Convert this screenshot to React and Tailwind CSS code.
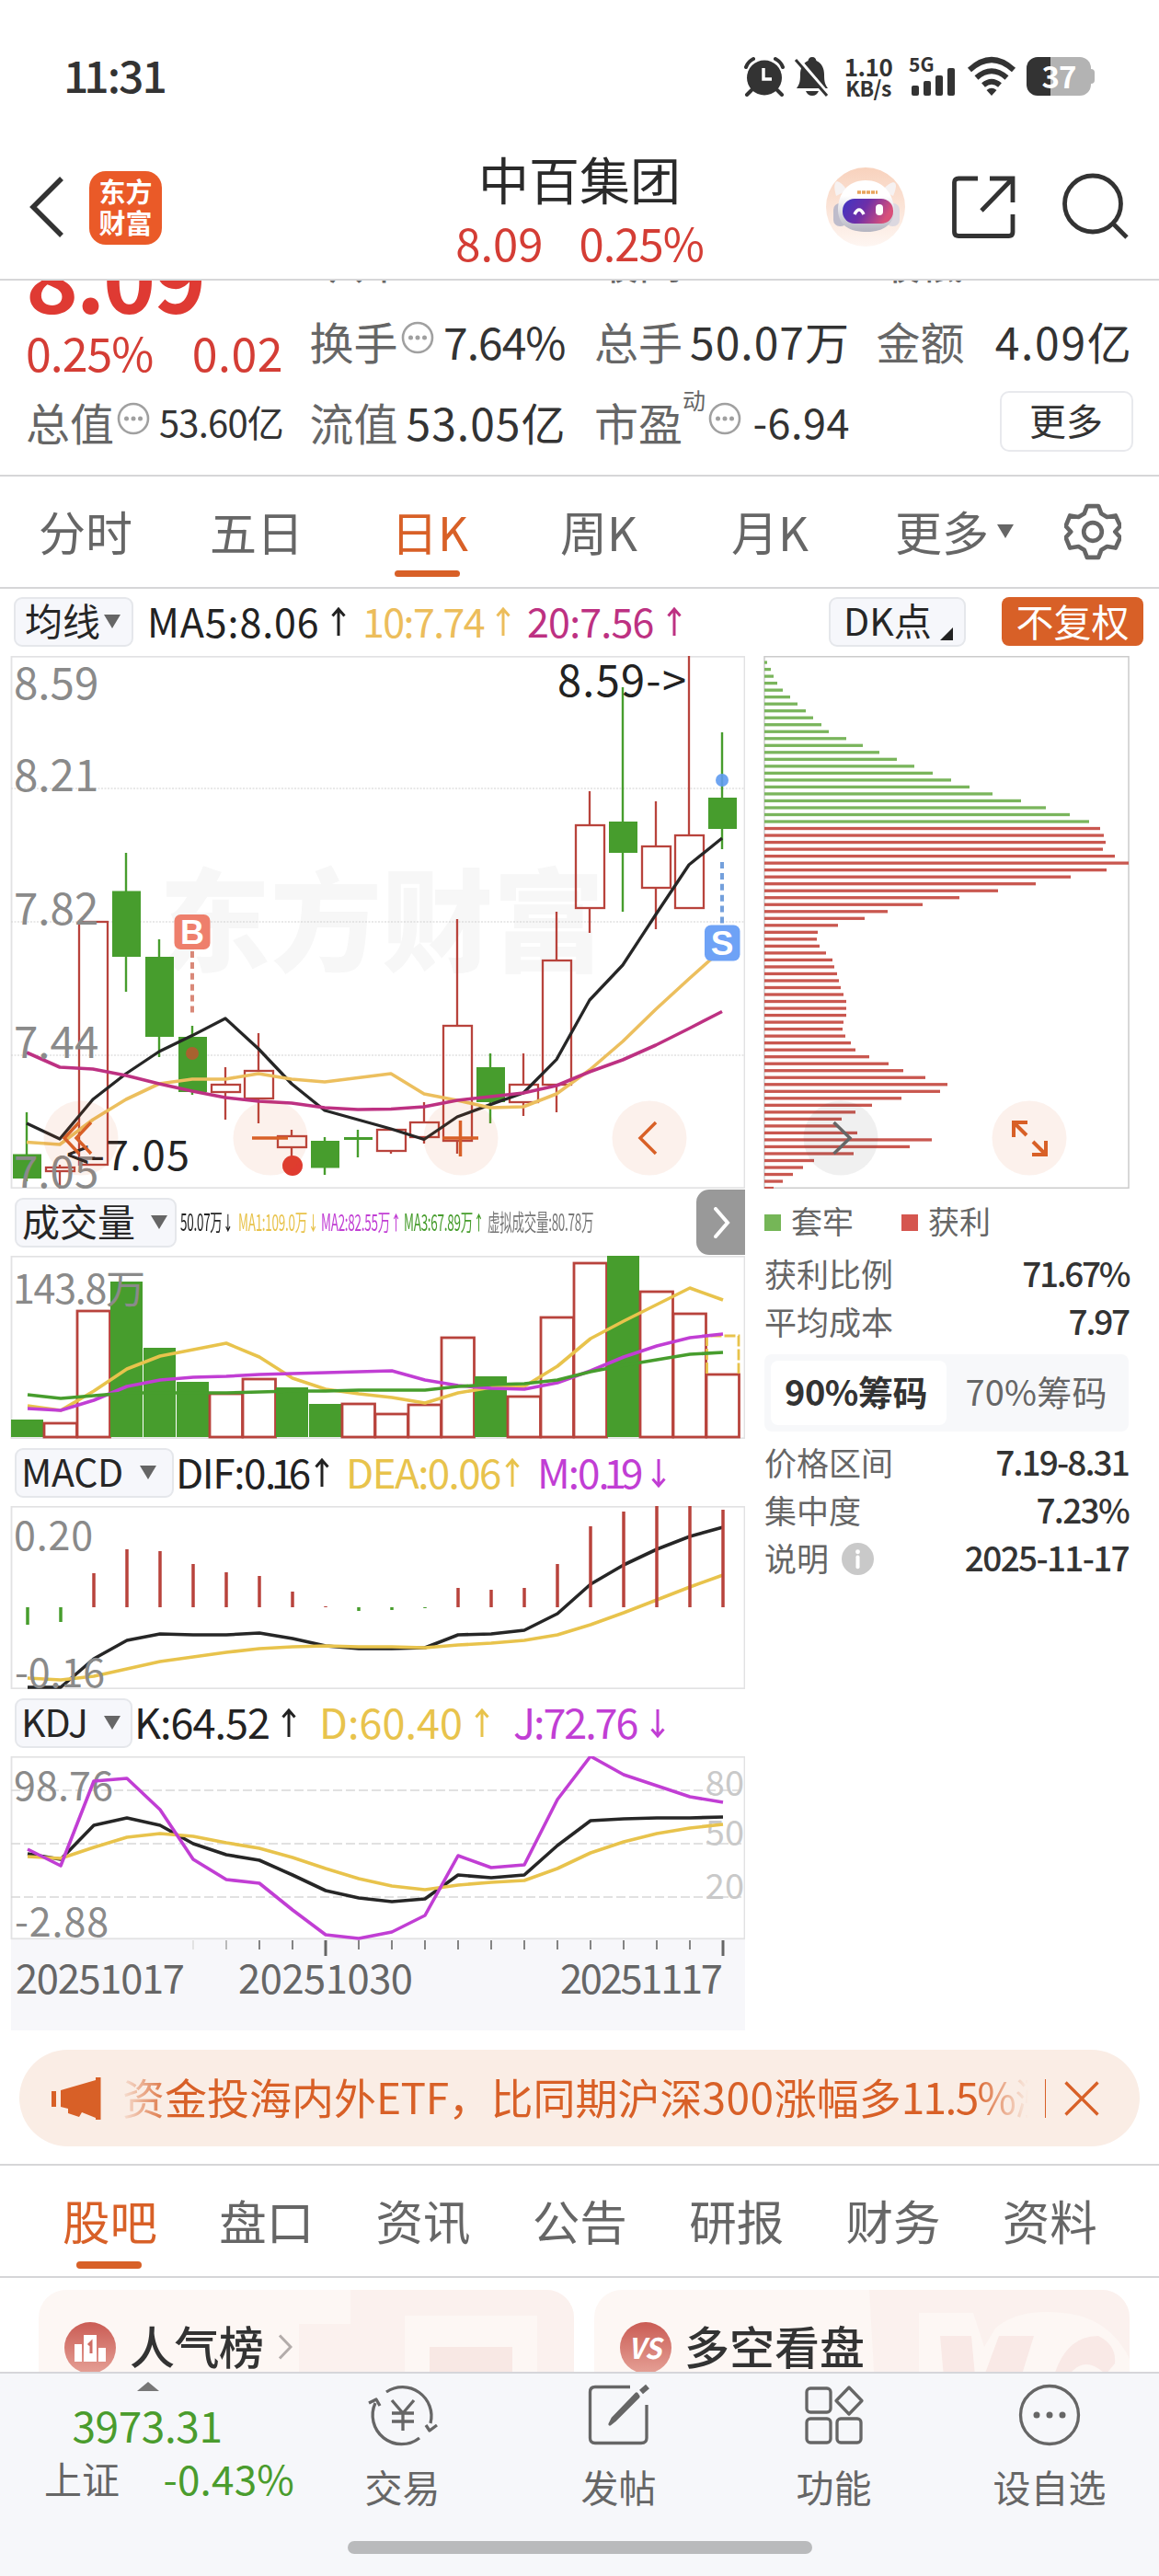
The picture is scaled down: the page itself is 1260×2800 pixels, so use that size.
import React from "react";

const X0 = 29;
const STEP = 36;
const RED = "#b8433c";
const GREEN = "#479d2d";

// [rising, bodyTop, bodyBottom, wickTop, wickBottom]
const candles = [
  [0, 1254.5, 1281, 1209, 1284],
  [1, 1269, 1273, 1266, 1292],
  [1, 1002, 1266, 1002, 1266],
  [0, 968.5, 1040, 927, 1078],
  [0, 1040, 1127, 1021, 1149],
  [0, 1127, 1187, 1115, 1190],
  [1, 1179, 1187, 1160, 1217],
  [1, 1164, 1194, 1123, 1221],
  [1, 1235, 1247, 1228, 1260],
  [0, 1240, 1269.5, 1236, 1277],
  [0, 1236, 1239, 1228, 1258],
  [1, 1228, 1251, 1228, 1254],
  [1, 1220, 1236, 1198, 1243],
  [1, 1115, 1240, 999, 1254],
  [0, 1160, 1198, 1145, 1221],
  [1, 1179, 1198, 1145, 1213],
  [1, 1044, 1179, 991, 1209],
  [1, 897, 987, 860, 1014],
  [0, 893, 927, 747, 991],
  [1, 920, 965, 871, 1010],
  [1, 908, 987, 713, 987],
  [0, 867, 901, 796, 923],
];
const ma5 = [1221, 1238, 1195, 1167, 1143, 1125.6, 1107, 1140, 1178, 1207, 1217, 1227, 1238.5, 1214, 1200.6, 1188, 1151.6, 1087, 1049, 994, 940, 911];
const ma10 = [1241.5, 1244, 1217, 1195, 1178, 1173, 1173, 1167, 1173, 1176, 1171.5, 1167, 1189, 1196, 1204, 1203, 1189, 1163, 1132, 1097, 1064, 1032];
const ma20 = [1144, 1160, 1162, 1169, 1178, 1186, 1193, 1197, 1199, 1204, 1206, 1205.5, 1203, 1196, 1192, 1188, 1180, 1165, 1152, 1136, 1118, 1099.5];

const volumes = [
  [0, 1543], [1, 1547], [1, 1425], [0, 1393], [0, 1465], [0, 1502], [1, 1515], [1, 1499], [0, 1508], [0, 1526], [1, 1526],
  [1, 1537], [1, 1527], [1, 1454], [0, 1496], [1, 1518], [1, 1432], [1, 1373], [0, 1365], [1, 1404], [1, 1428], [1, 1494],
];
const vol1 = [1528, 1533, 1512, 1488, 1474, 1467, 1460, 1475, 1498, 1510, 1515, 1519, 1525, 1514, 1508, 1507, 1485, 1455, 1436, 1418, 1400, 1413];
const vol2 = [1531, 1533, 1522, 1507, 1500, 1497, 1496, 1494, 1493, 1492, 1491, 1490, 1500, 1506, 1509, 1510, 1503, 1490, 1475, 1463, 1454, 1450];
const vol3 = [1516, 1520, 1517, 1514, 1514, 1514, 1514, 1513, 1512, 1512, 1511, 1511, 1511, 1507, 1505, 1504, 1500, 1491, 1484, 1478, 1472, 1470];

const macdBars = [1766, 1763, 1710, 1684, 1686, 1700, 1709, 1713, 1730, 1746, 1751, 1750, 1748, 1726, 1728, 1726, 1700, 1659, 1643, 1637, 1637, 1641];
const dif = [1834, 1834, 1803, 1783, 1776, 1777, 1777, 1775, 1781, 1789, 1792, 1792, 1791, 1777, 1776, 1772, 1754, 1722, 1701, 1684, 1670, 1660];
const dea = [1824, 1826, 1822, 1814, 1806, 1801, 1796, 1792, 1790, 1789, 1790, 1790, 1791, 1788, 1786, 1783, 1777, 1766, 1753, 1739, 1725, 1712];

const kLine = [2015, 2021, 1984, 1976, 1984, 2004, 2016, 2022, 2038, 2055, 2063, 2067, 2064, 2038, 2041, 2038, 2006, 1979, 1977, 1976, 1976, 1975];
const dLine = [2018, 2020, 2008, 1997, 1993, 1996, 2003, 2009, 2019, 2031, 2042, 2050, 2054, 2049, 2046, 2044, 2031, 2014, 2002, 1993, 1987, 1983];
const jLine = [2010, 2028, 1936, 1933, 1967, 2021, 2043, 2047, 2076, 2103, 2107, 2100, 2082, 2017, 2030, 2027, 1956, 1909, 1929, 1941, 1953, 1959];

const chipsTrapped = [3, 7, 10, 14, 20, 28, 36, 45, 53, 62, 70, 89, 107, 125, 144, 163, 183, 203, 223, 248, 279, 306, 332, 353];
const chipsProfit = [
  365, 369, 371, 368, 381, 396, 372, 333, 295, 254, 212, 172, 134, 109, 80, 58, 57, 60, 67, 74, 76, 79, 81, 83, 86, 89, 89, 89, 86, 85, 88,
  94, 99, 114, 135, 151, 175, 199, 191, 149, 117, 99, 84, 80, 101, 182, 158, 97, 54, 42, 31, 20, 10,
];

const pts = (ys, x0 = 30) => ys.map((y, i) => `${x0 + i * STEP},${y}`).join(" ");

function Line({ ys, color, x0, w = 3.6 }) {
  return <polyline points={pts(ys, x0)} fill="none" stroke={color} strokeWidth={w} strokeLinejoin="round" />;
}

function Frame({ top, height }) {
  return <rect x="12.5" y={top + 0.75} width="797" height={height - 1.5} fill="none" stroke="#e2e2e3" strokeWidth="1.8" />;
}

function Arrow({ down, className = "h-8 w-4" }) {
  return (
    <svg viewBox="0 0 16 32" className={`shrink-0 ${className}`} fill="none" stroke="currentColor" strokeWidth="3">
      {down ? <path d="M8 1V30M1.5 22.5L8 30L14.5 22.5" /> : <path d="M8 31V2M1.5 9.500L8 2L14.5 9.500" />}
    </svg>
  );
}

function Caret({ className = "" }) {
  return (
    <svg viewBox="0 0 18 15" className={`h-[15px] w-[18px] shrink-0 ${className}`} fill="#666">
      <path d="M0 0H18L9 15Z" />
    </svg>
  );
}

function More() {
  return (
    <svg viewBox="0 0 36 36" className="relative -top-[3px] ml-[3px] h-9 w-9 shrink-0">
      <circle cx="18" cy="18" r="16" fill="none" stroke="#a0a0a0" strokeWidth="2.6" />
      <g fill="#a0a0a0">
        <circle cx="10.500" cy="18" r="2.500" />
        <circle cx="18" cy="18" r="2.500" />
        <circle cx="25.500" cy="18" r="2.500" />
      </g>
    </svg>
  );
}

function StatusBar() {
  return (
    <div className="flex h-[166px] shrink-0 items-start pl-[69px] text-[#333]">
      <div className="mt-[56px] w-[739px] text-[48px] leading-[48px] font-medium">
        <span className="tracking-[-5px]">11</span>
        <span className="ml-[3px] tracking-[-2px]">:31</span>
      </div>
      <svg viewBox="0 0 46 44" className="mt-[61px] h-[44px] w-[46px]">
        <circle cx="23" cy="23.500" r="19" fill="#333" />
        <path d="M3 12Q5 6 11 3M43 12Q41 6 35 3M9 37L4 42M37 37L42 42" stroke="#333" strokeWidth="4" strokeLinecap="round" fill="none" />
        <path d="M22 13V25H31" stroke="#fff" strokeWidth="3.500" fill="none" />
      </svg>
      <svg viewBox="0 0 40 44" className="mt-[61px] ml-[9px] h-[44px] w-[40px]">
        <path d="M20 1C23 1 24 3 24.500 5C31 8 33 14 33 20C33 28 34 31 37 35H3C6 31 7 28 7 20C7 14 9 8 15.500 5C16 3 17 1 20 1Z M13 38H27Q25 43 20 43Q15 43 13 38Z" fill="#333" />
        <path d="M4 2L38 42" stroke="#fff" strokeWidth="4" />
        <path d="M2 4L36 43" stroke="#333" strokeWidth="3" />
      </svg>
      <div className="mt-[59px] ml-[13px] flex w-[56px] flex-col text-center font-semibold tracking-[-0.5px]">
        <span className="text-[26px] leading-[25px]">1.10</span>
        <span className="text-[23px] leading-[22px]">KB/s</span>
      </div>
      <div className="mt-[59px] ml-[16px] w-[52px]">
        <div className="h-[15px] text-[21px] leading-[21px] font-bold">5G</div>
        <svg viewBox="0 0 48 30" className="ml-[3px] h-[30px] w-[48px]" fill="#333">
          <rect x="0" y="19" width="8" height="11" rx="2" />
          <rect x="13" y="14" width="8" height="16" rx="2" />
          <rect x="26" y="8" width="8" height="22" rx="2" />
          <rect x="39" y="0" width="8" height="30" rx="2" />
        </svg>
      </div>
      <svg viewBox="0 0 54 44" className="mt-[61px] ml-[11px] h-[44px] w-[54px]" fill="none" stroke="#333" strokeWidth="6">
        <path d="M3 15Q27 -7 51 15M10.500 23.500Q27 9 43.500 23.500M18 31.500Q27 24 36 31.500" />
        <path d="M21.500 37Q27 32.500 32.500 37L27 43Z" fill="#333" stroke="none" />
      </svg>
      <div className="mt-[62px] ml-[11px] flex h-[42px] items-center">
        <div className="flex h-[42px] w-[70px] items-center justify-center rounded-[12px] bg-[linear-gradient(90deg,#333_37%,#b3b3b3_37%)] pb-[2px] text-[33px] leading-none font-bold tracking-[-1px] text-white">
          37
        </div>
        <div className="h-4 w-1 rounded-r-full bg-[#b3b3b3]" />
      </div>
    </div>
  );
}

function Robot() {
  return (
    <svg viewBox="0 0 88 88" className="h-[88px] w-[88px]">
      <defs>
        <linearGradient id="rb" x1="0" y1="0" x2="0" y2="1">
          <stop offset="0" stopColor="#f8d2bd" />
          <stop offset="1" stopColor="#fef6f2" />
        </linearGradient>
        <linearGradient id="rf" x1="0" y1="0" x2="1" y2="0.300">
          <stop offset="0" stopColor="#3f35c4" />
          <stop offset="0.500" stopColor="#6d2fa8" />
          <stop offset="1" stopColor="#d8507a" />
        </linearGradient>
        <linearGradient id="rh" x1="0" y1="0" x2="0" y2="1">
          <stop offset="0.300" stopColor="#fff" />
          <stop offset="1" stopColor="#b4b4c0" />
        </linearGradient>
      </defs>
      <circle cx="44" cy="44" r="43" fill="url(#rb)" />
      <path d="M12 32Q8 18 13 16Q18 17 24 26ZM74 32Q80 18 74 17Q69 18 62 26Z" fill="#f6f2f2" />
      <rect x="9" y="40" width="15" height="25" rx="7" fill="#bebccb" />
      <rect x="66" y="40" width="15" height="25" rx="7" fill="#dcd8e0" />
      <path d="M44 15C62 15 74 28 75 46C76 62 64 71 46 71C26 71 15 64 14 48C14 30 24 15 44 15Z" fill="url(#rh)" />
      <rect x="19" y="35" width="55" height="27" rx="13" fill="url(#rf)" />
      <path d="M32 52Q37 42 42 52" fill="none" stroke="#fff" strokeWidth="3.500" />
      <rect x="55" y="41" width="8" height="12" rx="4" fill="#fff" />
      <path d="M35 28H57" stroke="#e8a45c" strokeWidth="3.500" strokeDasharray="4 1" />
    </svg>
  );
}

function Header() {
  return (
    <div className="flex h-[139px] shrink-0 items-start border-b-2 border-[#d6d6d8] text-[#333]">
      <svg viewBox="0 0 40 66" className="mt-[26px] ml-[31px] h-[66px] w-[40px]" fill="none" stroke="#333" strokeWidth="5.500">
        <path d="M36 2L5 33L36 64" />
      </svg>
      <div className="mt-[20px] ml-[26px] flex h-[80px] w-[79px] flex-col items-center rounded-[18px] bg-[#ea5a28] pt-[4px] text-[29px] leading-[34px] font-bold text-white">
        <span>东方</span>
        <span>财富</span>
      </div>
      <div className="ml-[314px] w-[280px] text-center">
        <div className="h-[66px] text-[55px] leading-[55px] text-[#2a2a2a]">中百集团</div>
        <div className="flex justify-center gap-[39px] text-[49px] leading-[62px] text-[#d43d35]">
          <span>8.09</span>
          <span className="tracking-[-1px]">0.25%</span>
        </div>
      </div>
      <div className="mt-[15px] ml-[127px]">
        <Robot />
      </div>
      <svg viewBox="0 0 70 70" className="mt-[24px] ml-[49px] h-[70px] w-[70px]" fill="none" stroke="#333" strokeWidth="4.800">
        <path d="M29 4H8Q3.500 4 3.500 8V62Q3.500 66.500 8 66.500H63Q67 66.500 67 62V43" />
        <path d="M42 4H67V30M66 5L33 39" />
      </svg>
      <svg viewBox="0 0 74 74" className="mt-[22px] ml-[50px] h-[74px] w-[74px]" fill="none" stroke="#333" strokeWidth="4.800">
        <circle cx="34" cy="33.500" r="30.500" />
        <path d="M56 55L71 70" />
      </svg>
    </div>
  );
}

const quoteRow = "grid h-[52px] shrink-0 grid-cols-[280px_281px_278px_279px] items-start gap-x-[28.500px] pl-[28px] leading-[52px]";
const cell = "flex h-[52px] items-center";

function Quote() {
  return (
    <div className="flex h-[213px] shrink-0 flex-col overflow-hidden border-b-2 border-[#d6d6d8] text-[48px] leading-[48px] text-[#333]">
      <div className="-mt-[46px] grid h-[88px] shrink-0 grid-cols-[280px_281px_278px_279px] gap-x-[28.500px] pl-[28px] text-[#666]">
        <div className="-mt-[8px] text-[97px] leading-[96px] font-bold tracking-[-2.4px] text-[#df3a33]">8.09</div>
        <div className="-mt-px">今开</div>
        <div className="-mt-px">最高</div>
        <div className="-mt-px">最低</div>
      </div>
      <div className={`-mt-[3px] ${quoteRow}`}>
        <div className="mt-[12px] flex h-[52px] items-center justify-between text-[50px] tracking-[-1px] text-[#d43d35]">
          <span>0.25%</span>
          <span className="tracking-[0.5px]">0.02</span>
        </div>
        <div className={cell}>
          <span className="text-[#666]">换手</span>
          <More />
          <span className="mr-[3px] ml-auto tracking-[-1px]">7.64%</span>
        </div>
        <div className={cell}>
          <span className="text-[#666]">总手</span>
          <span className="ml-auto tracking-[1px]">50.07万</span>
        </div>
        <div className={cell}>
          <span className="text-[#666]">金额</span>
          <span className="ml-auto tracking-[1.7px]">4.09亿</span>
        </div>
      </div>
      <div className={`mt-[36px] ${quoteRow}`}>
        <div className={cell}>
          <span className="text-[#666]">总值</span>
          <More />
          <span className="ml-auto text-[40px] tracking-[-0.8px]">53.60亿</span>
        </div>
        <div className={cell}>
          <span className="text-[#666]">流值</span>
          <span className="mr-[2px] ml-auto tracking-[1px]">53.05亿</span>
        </div>
        <div className={cell}>
          <span className="text-[#666]">市盈</span>
          <span className="relative -top-[24px] text-[25px] leading-none text-[#666]">动</span>
          <More />
          <span className="ml-auto text-[45px] tracking-[0.5px]">-6.94</span>
        </div>
        <div className="flex justify-end">
          <div className="-mt-[7px] flex h-[66px] w-[145px] items-center justify-center rounded-[10px] border-2 border-[#e8e9ed] pb-[4px] text-[40px]">更多</div>
        </div>
      </div>
    </div>
  );
}

function PeriodTabs() {
  return (
    <div className="flex h-[122px] shrink-0 items-center border-b-2 border-[#d6d6d8] pb-[3px] pl-[42px] text-[51px] leading-[60px] text-[#666]">
      <span className="w-[186px]">分时</span>
      <span className="w-[197px]">五日</span>
      <span className="flex w-[184px] flex-col text-[#d86027]">
        <span className="h-[60px]">日K</span>
        <span className="relative top-[13px] ml-[4px] -mb-[7px] h-[7px] w-[71px] rounded-full bg-[#d86027]" />
      </span>
      <span className="w-[186px]">周K</span>
      <span className="w-[178px]">月K</span>
      <span className="w-[111px]">更多</span>
      <Caret className="mt-[2px]" />
      <svg viewBox="0 0 60 60" className="mt-[3px] ml-[55px] h-[62px] w-[62px]" fill="none" stroke="#666" strokeWidth="4.500" strokeLinejoin="round">
        <path d="M24 3H36L39 11L45 14.500L54 13L59 24L53.500 30L59 36L54 47L45 45.500L39 49L36 57H24L21 49L15 45.500L6 47L1.500 36L7 30L1.500 24L6 13L15 14.500L21 11Z" />
        <circle cx="30" cy="30" r="9.500" />
      </svg>
    </div>
  );
}

function Pill({ children, className }) {
  return (
    <div className={`flex h-[54px] shrink-0 items-center rounded-[9px] border-2 border-[#e5e7eb] bg-[#f6f7fb] text-[41px] leading-[41px] text-[#262626] ${className}`}>
      {children}
    </div>
  );
}

function Toolbar() {
  return (
    <div className="flex h-[73px] shrink-0 items-center pb-[2px] pl-[15px] text-[43px] leading-[48px] text-[#222]">
      <Pill className="w-[130px] pl-[10px]">
        <span className="relative -top-[2px]">均线</span>
        <Caret className="ml-[4px]" />
      </Pill>
      <span className="relative -top-[2px] ml-[15px] w-[200px] tracking-[0.9px]">MA5:8.06</span>
      <Arrow />
      <span className="relative -top-[2px] ml-[18px] w-[145px] tracking-[-1.6px] text-[#ecbd5b]">10:7.74</span>
      <Arrow className="h-8 w-4 text-[#ecbd5b]" />
      <span className="relative -top-[2px] ml-[18px] w-[152px] tracking-[-0.8px] text-[#bd3182]">20:7.56</span>
      <Arrow className="h-8 w-4 text-[#bd3182]" />
      <Pill className="ml-[160px] w-[149px] pl-[14px]">
        <span className="relative -top-[2px]">DK点</span>
        <svg viewBox="0 0 14 14" className="mt-[26px] ml-[9px] h-[14px] w-[14px]" fill="#222">
          <path d="M14 0V14H0Z" />
        </svg>
      </Pill>
      <div className="ml-[39px] flex h-[53px] w-[154px] items-center justify-center rounded-[8px] bg-[#d86027] pb-[4px] text-[41px] text-white">不复权</div>
    </div>
  );
}

function Round({ cx, fill = "#d86027", stroke = "#d86027", d, w = 3.5 }) {
  return (
    <g>
      <circle cx={cx} cy="1237" r="40.500" fill={fill} fillOpacity="0.085" />
      <path d={d} fill="none" stroke={stroke} strokeWidth={w} />
    </g>
  );
}

function PriceChart() {
  const axis = [["8.59", 742], ["8.21", 842], ["7.82", 987], ["7.44", 1132], ["7.05", 1273]];
  return (
    <svg viewBox="0 713 810 579" className="h-[579px] w-[810px] shrink-0">
      <Frame top={713} height={579} />
      <text x="173" y="1046" fontSize="121" fontWeight="900" fill="#f7f7f7">东方财富</text>
      {[857, 1002, 1147].map((y) => (
        <path key={y} d={`M12 ${y}H809`} stroke="#d2d2d2" strokeWidth="1.200" strokeDasharray="2 1.500" />
      ))}
      {candles.map(([up, t, b, wt, wb], i) => {
        const c = X0 + i * STEP;
        return up ? (
          <g key={i} stroke={RED} strokeWidth="2.300" fill="none">
            <path d={`M${c} ${wt}V${t}M${c} ${b}V${wb}`} />
            <rect x={c - 15} y={t} width="31" height={b - t} />
          </g>
        ) : (
          <g key={i} fill={GREEN}>
            <rect x={c - 1.2} y={wt} width="2.400" height={wb - wt} />
            <rect x={c - 15} y={t} width="31" height={b - t} />
          </g>
        );
      })}
      <Line ys={ma5} color="#262626" x0={29} w={3.3} />
      <Line ys={ma10} color="#ecbf5e" x0={29} />
      <Line ys={ma20} color="#bd3182" x0={29} />
      <circle cx="209" cy="1145" r="7" fill="#a8622f" />
      <path d="M209 1034V1102" stroke="#d98878" strokeWidth="4" strokeDasharray="7 4.900" />
      <rect x="189.500" y="994" width="39" height="38" rx="7" fill="#ee7f6c" />
      <text x="209" y="1026" fontSize="36" fontWeight="700" fill="#fff" textAnchor="middle" fontFamily="Liberation Sans">B</text>
      <circle cx="785" cy="848" r="7" fill="#5f9bf0" fillOpacity="0.900" />
      <path d="M785 937V1005" stroke="#74a0dc" strokeWidth="4" strokeDasharray="7 4.900" />
      <rect x="766" y="1005.500" width="38.500" height="39" rx="7" fill="#6ea2f6" />
      <text x="785" y="1038" fontSize="37" fontWeight="700" fill="#fff" textAnchor="middle" fontFamily="Liberation Sans">S</text>
      <circle cx="318" cy="1267" r="11" fill="#df3b30" />
      {axis.map(([t, y]) => (
        <text key={t} x="15" y={y + 17.5} fontSize="47.500" fill="#8a8a8a">{t}</text>
      ))}
      <text x="606" y="757" fontSize="47" fill="#222" textLength="140">8.59-&gt;</text>
      <text x="72" y="1272" fontSize="45" fill="#222" textLength="134">&lt;-7.05</text>
      <Round cx={88} d="M86 1220L70 1237L86 1254M99 1220L83 1237L99 1254" />
      <Round cx={294} d="M274 1237H313" />
      <Round cx={501} d="M481 1237H520M500.500 1218V1257" />
      <Round cx={706} d="M713 1220L696 1237L713 1254" />
    </svg>
  );
}

function SmallStat({ color, w, text, arrow, down }) {
  return (
    <div className={`${w} ${color} shrink-0`}>
      <div className="flex w-max origin-left scale-x-[0.54] items-center gap-[5px] text-[25px] leading-[28px] tracking-[-0.5px]">
        <span>{text}</span>
        {arrow && <Arrow down={down} className="mt-[4px] h-5 w-3.5" />}
      </div>
    </div>
  );
}

function VolumeBar() {
  return (
    <div className="flex h-[73px] items-center pl-[16px]">
      <Pill className="w-[176px] pl-[6px]">
        <span className="relative -top-[2px]">成交量</span>
        <Caret className="ml-[17px]" />
      </Pill>
      <div className="-mt-[4px] ml-[4px] flex">
        <SmallStat w="w-[63px]" color="text-[#222]" text="50.07万" arrow down />
        <SmallStat w="w-[90px]" color="text-[#e8c34c]" text="MA1:109.0万" arrow down />
        <SmallStat w="w-[90px]" color="text-[#c13ed4]" text="MA2:82.55万" arrow />
        <SmallStat w="w-[91px]" color="text-[#479d2d]" text="MA3:67.89万" arrow />
        <SmallStat w="w-[227px]" color="text-[#777]" text="虚拟成交量:80.78万" />
      </div>
      <div className="flex h-[71px] w-[53px] items-center justify-center rounded-l-[14px] bg-[#999]">
        <svg viewBox="0 0 18 34" className="ml-[3px] h-[34px] w-[18px]" fill="none" stroke="#fff" strokeWidth="4" strokeLinecap="round">
          <path d="M2 2L15 17L2 32" />
        </svg>
      </div>
    </div>
  );
}

function VolumeChart() {
  return (
    <svg viewBox="0 1365 810 199" className="h-[199px] w-[810px] shrink-0">
      <Frame top={1365} height={199} />
      {volumes.map(([up, t], i) =>
        up ? (
          <rect key={i} x={12 + i * STEP} y={t} width="35.500" height={1562 - t} fill="#fff" stroke={RED} strokeWidth="2.800" />
        ) : (
          <rect key={i} x={12 + i * STEP} y={t} width="35" height={1562 - t} fill={GREEN} />
        )
      )}
      <path d="M768.500 1493V1452H803V1493" fill="none" stroke="#e8c34c" strokeWidth="2.800" strokeDasharray="12 3" />
      <Line ys={vol1} color="#e8c34c" />
      <Line ys={vol2} color="#c13ed4" />
      <Line ys={vol3} color={GREEN} />
      <text x="14" y="1417" fontSize="43" fill="#8a8a8a" textLength="144">143.8万</text>
    </svg>
  );
}

function MacdBar() {
  return (
    <div className="flex h-[73px] items-center pl-[16px] text-[44px] leading-[48px] text-[#222]">
      <Pill className="w-[173px] pl-[5px]">
        <span className="relative -top-[2px] tracking-[-0.3px]">MACD</span>
        <Caret className="ml-[18px]" />
      </Pill>
      <span className="relative -top-[2px] ml-[2px] w-[151px] tracking-[-1.4px]">
        DIF:0<span className="tracking-[-5.5px]">.1</span>6
      </span>
      <Arrow />
      <span className="relative -top-[2px] ml-[18px] w-[173px] tracking-[-1.6px] text-[#e8c34c]">DEA:0.06</span>
      <Arrow className="h-8 w-4 text-[#e8c34c]" />
      <span className="relative -top-[2px] ml-[19px] w-[124px] tracking-[-2px] text-[#c13ed4]">
        M:0<span className="tracking-[-6px]">.1</span>9
      </span>
      <Arrow down className="h-8 w-4 text-[#c13ed4]" />
    </div>
  );
}

function MacdChart() {
  return (
    <svg viewBox="0 1637 810 199" className="h-[199px] w-[810px] shrink-0">
      <Frame top={1637} height={199} />
      <Line ys={dif} color="#262626" />
      <Line ys={dea} color="#e8c34c" />
      {macdBars.map((y, i) => (
        <path key={i} d={`M${30 + i * STEP} 1747V${y}`} stroke={y > 1747 ? GREEN : RED} strokeWidth="3.500" />
      ))}
      <text x="15" y="1685" fontSize="43" fill="#8a8a8a" textLength="86">0.20</text>
      <text x="16" y="1833.500" fontSize="43" fill="#8a8a8a" textLength="98">-0.16</text>
    </svg>
  );
}

function KdjBar() {
  return (
    <div className="flex h-[73px] items-center pl-[16px] text-[45px] leading-[48px] text-[#222]">
      <Pill className="w-[128px] pl-[5px]">
        <span className="relative -top-[2px] tracking-[-0.9px]">KDJ</span>
        <Caret className="ml-[18px]" />
      </Pill>
      <span className="relative -top-[2px] ml-[2px] w-[160px] tracking-[-1px]">K:64.52</span>
      <Arrow />
      <span className="relative -top-[2px] ml-[25px] w-[169px] text-[#e8c34c]">D:60.40</span>
      <Arrow className="h-8 w-4 text-[#e8c34c]" />
      <span className="relative -top-[2px] ml-[26px] w-[149px] tracking-[-2.1px] text-[#c13ed4]">J:72.76</span>
      <Arrow down className="h-8 w-4 text-[#c13ed4]" />
    </div>
  );
}

function KdjChart() {
  return (
    <svg viewBox="0 1909 810 298" className="h-[298px] w-[810px] shrink-0">
      <rect x="12" y="2108" width="798" height="99" fill="#f7f7fa" />
      <Frame top={1909} height={199} />
      {[1946, 2004, 2062].map((y) => (
        <path key={y} d={`M12 ${y}H809`} stroke="#d8d8d8" strokeWidth="1.500" strokeDasharray="10 4" />
      ))}
      {[["80", 1952], ["50", 2006], ["20", 2064]].map(([t, y]) => (
        <text key={t} x="809" y={y} fontSize="38" fill="#c9c9c9" textAnchor="end">{t}</text>
      ))}
      <text x="15" y="1957" fontSize="43" fill="#8a8a8a" textLength="108">98.76</text>
      <Line ys={kLine} color="#262626" />
      <Line ys={dLine} color="#e8c34c" />
      <Line ys={jLine} color="#c13ed4" />
      <text x="16" y="2105" fontSize="43" fill="#8a8a8a" textLength="102">-2.88</text>
      {kLine.map((_, i) => {
        if (i < 5) return null;
        const major = i === 9 || i === 21;
        const color = i === 5 ? "#ddd" : i === 6 ? "#aaa" : "#666";
        return <path key={i} d={`M${30 + i * STEP} 2109V${major ? 2126 : 2119}`} stroke={color} strokeWidth={major ? 3 : 1.6} />;
      })}
      <g fontSize="43.500" fill="#666">
        <text x="17" y="2167" textLength="184">20251017</text>
        <text x="259" y="2167" textLength="190">20251030</text>
        <text x="609" y="2167" textLength="177">20251117</text>
      </g>
    </svg>
  );
}

function ChipChart() {
  const rows = [...chipsTrapped.map((w) => [w, "#7ab55c"]), ...chipsProfit.map((w) => [w, "#c9574f"])];
  return (
    <svg viewBox="830 713 398 579" className="-ml-px h-[579px] w-[398px] shrink-0">
      <rect x="831" y="713.750" width="396" height="577.500" fill="none" stroke="#cbcbcb" strokeWidth="1.500" />
      {rows.map(([w, c], i) => (
        <rect key={i} x="831" y={718.4 + i * 7.52} width={w} height="3.300" fill={c} />
      ))}
      <Round cx={914} fill="#555" stroke="#666" d="M906.500 1220L924 1237L906.500 1254" />
      <Round cx={1119} w={4} d="M1117 1220H1102V1236M1103 1221L1116 1234M1122 1255H1137V1240M1136 1254L1123 1241" />
    </svg>
  );
}

function StatRow({ name, value, tight = "tracking-[-1.700px]", children }) {
  return (
    <div className="flex h-[52px] items-center pb-[5px]">
      <span className="text-[35px] leading-[47px] text-[#666]">{name}</span>
      {children}
      <span className={`ml-auto text-[37px] leading-[47px] font-medium text-[#333] ${tight}`}>{value}</span>
    </div>
  );
}

function ChipPanel() {
  return (
    <div className="flex w-[417px] flex-col pl-[21px]">
      <ChipChart />
      <div className="flex h-[68px] items-center pt-[2px] text-[34px] leading-none text-[#666]">
        <span className="mt-[4px] h-[18px] w-[18px] bg-[#75b657]" />
        <span className="ml-[11px] w-[120px]">套牢</span>
        <span className="mt-[4px] h-[18px] w-[18px] bg-[#d5564f]" />
        <span className="ml-[11px]">获利</span>
      </div>
      <StatRow name="获利比例" value="71.67%" tight="tracking-[-2.400px]" />
      <StatRow name="平均成本" value="7.97" tight="tracking-[-2.200px]" />
      <div className="mt-[8px] flex h-[84px] items-center rounded-[8px] bg-[#f7f8fa] p-[7px] text-[38px] leading-none">
        <div className="flex h-[70px] w-[191px] items-center justify-center rounded-[8px] bg-white pr-[6px] pb-[4px] font-bold tracking-[-0.5px] text-[#333]">90%筹码</div>
        <div className="flex flex-1 items-center justify-center pb-[4px] pl-[4px] tracking-[0.2px] text-[#666]">70%筹码</div>
      </div>
      <div className="h-[9px]" />
      <StatRow name="价格区间" value="7.19-8.31" tight="tracking-[-1.900px]" />
      <StatRow name="集中度" value="7.23%" />
      <StatRow name="说明" value="2025-11-17">
        <svg viewBox="0 0 36 36" className="mt-[3px] ml-[14px] h-[35px] w-[35px]">
          <circle cx="18" cy="18" r="18" fill="#c9c9c9" />
          <circle cx="18" cy="10" r="2.500" fill="#fff" />
          <path d="M18 16V27" stroke="#fff" strokeWidth="4.200" strokeLinecap="round" />
        </svg>
      </StatRow>
    </div>
  );
}

function Banner() {
  return (
    <div className="mt-[21px] ml-[21px] flex h-[105px] w-[1218px] shrink-0 items-center rounded-full bg-[#faede5] pl-[35px] text-[#d86027]">
      <svg viewBox="0 0 54 46" className="h-[46px] w-[54px]" fill="#d86027">
        <rect x="0" y="15" width="5" height="17" />
        <path d="M10 14L48 3V44L33 38L30 43L18 39V34L10 32Z" />
        <rect x="48" y="0" width="5.500" height="46" />
      </svg>
      <div className="ml-[18px] w-[990px] overflow-hidden [mask-image:linear-gradient(90deg,transparent,#000_6%,#000_94%,transparent)]">
        <div className="-mt-[5px] w-max pl-[5px] text-[46px] leading-[60px] whitespace-nowrap">
          资金投海内外<span className="tracking-[-0.5px]">ETF</span>，比同期沪深<span className="tracking-[0.5px]">300</span>涨幅多<span className="tracking-[-1.6px]">11.5%</span>涨
        </div>
      </div>
      <div className="ml-[18px] h-[42px] w-px bg-[#d86027]" />
      <svg viewBox="0 0 38 38" className="ml-[20px] h-[38px] w-[38px]" stroke="#d86027" strokeWidth="3.300">
        <path d="M1.500 1.500L36.500 36.500M36.500 1.500L1.500 36.500" />
      </svg>
    </div>
  );
}

function SectionTabs() {
  const rest = ["盘口", "资讯", "公告", "研报", "财务", "资料"];
  return (
    <div className="mt-[19px] flex h-[124px] shrink-0 items-start border-y-2 border-[#d6d6d8] pt-[29px] pl-[68px] text-[51.500px] leading-[60px] text-[#666]">
      <div className="flex w-[170.500px] flex-col text-[#d86027]">
        <span>股吧</span>
        <span className="mt-[15px] ml-[15px] h-[8px] w-[71px] rounded-full bg-[#d86027]" />
      </div>
      {rest.map((t) => (
        <span key={t} className="w-[170.500px]">{t}</span>
      ))}
    </div>
  );
}

function Cards() {
  return (
    <div className="flex h-[102px] shrink-0 gap-[22px] overflow-hidden pt-[13px] pl-[42px] text-[49px] leading-[60px] font-medium text-[#333]">
      <div className="relative flex h-[140px] w-[582px] items-start overflow-hidden rounded-[30px] bg-[#fdf7f4] pl-[28px]">
        <svg viewBox="0 0 582 140" className="absolute top-0 left-0 h-[140px] w-[582px]">
          <path d="M339 0H582V140H283V37H339Z" fill="#fbf1ee" />
          <path d="M398 28H542V140H515V62H425V140H398Z" fill="#fdf7f4" />
          <path d="M425 62H515V140H425Z" fill="#f8e8e4" />
        </svg>
        <svg viewBox="0 0 56 56" className="relative mt-[35px] h-[56px] w-[56px]">
          <defs>
            <linearGradient id="cd" x1="0" y1="0" x2="0" y2="1">
              <stop offset="0" stopColor="#ca5c54" />
              <stop offset="1" stopColor="#e5a096" />
            </linearGradient>
          </defs>
          <circle cx="28" cy="28" r="28" fill="url(#cd)" />
          <path d="M11 24H19V43H11ZM21 14H35V43H21ZM37 28H45V43H37Z" fill="#fff" />
          <path d="M26 25L29 22V34" stroke="#cf6d64" strokeWidth="3" fill="none" />
        </svg>
        <span className="relative mt-[30px] ml-[15px] tracking-[-0.5px]">人气榜</span>
        <svg viewBox="0 0 16 28" className="relative mt-[48px] ml-[15px] h-[28px] w-[16px]" fill="none" stroke="#b3acaa" strokeWidth="3">
          <path d="M2 1.500L14 14L2 26.500" />
        </svg>
      </div>
      <div className="relative flex h-[140px] w-[582px] items-start overflow-hidden rounded-[30px] bg-[#fdf7f4] pl-[28px]">
        <svg viewBox="0 0 582 140" className="absolute top-0 left-0 h-[140px] w-[582px]">
          <path d="M299 0H582V140H307Z" fill="#fbf1ee" />
          <path d="M353 25H412L424 62L436 42Q460 20 510 25Q560 30 582 75V140H353Z" fill="#fdf7f4" />
          <path d="M376 50H410L416 115L440 50H478L450 140H384ZM492 140Q498 50 548 50Q568 60 566 80L556 92Q536 72 520 88Q512 100 512 140Z" fill="#f9e9e6" />
        </svg>
        <svg viewBox="0 0 56 56" className="relative mt-[35px] h-[56px] w-[56px]">
          <circle cx="28" cy="28" r="28" fill="url(#cd)" />
          <text x="27" y="40" textAnchor="middle" fontSize="31" fontWeight="700" fontStyle="italic" fill="#fff" textLength="36" lengthAdjust="spacingAndGlyphs">VS</text>
        </svg>
        <span className="relative mt-[30px] ml-[14px]">多空看盘</span>
      </div>
    </div>
  );
}

function NavItem({ text, w, children }) {
  return (
    <div className={`flex flex-col items-center ${w}`}>
      <svg viewBox="0 0 76 70" className="mt-[10px] h-[70px] w-[76px]" fill="none" stroke="#666" strokeWidth="3.300" strokeLinejoin="round">
        {children}
      </svg>
      <span className="mt-[18px] text-[41px] leading-[48px] text-[#666]">{text}</span>
    </div>
  );
}

function BottomBar() {
  return (
    <div className="flex h-[223px] shrink-0 flex-col border-t-2 border-[#d6d6da] bg-[#f6f7fa]">
      <div className="flex h-[182px]">
        <div className="flex w-[320px] flex-col">
          <svg viewBox="0 0 24 10" className="mt-[9px] ml-[149px] h-[10px] w-[24px]" fill="#777">
            <path d="M12 0L24 10H0Z" />
          </svg>
          <div className="mt-[10px] text-center text-[46px] leading-[52px] tracking-[-0.4px] text-[#4a9c2d]">3973.31</div>
          <div className="mt-[7px] flex justify-between pl-[48px] text-[41px] leading-[50px] text-[#666]">
            <span>上证</span>
            <span className="text-[44px] tracking-[0.2px] text-[#4a9c2d]">-0.43%</span>
          </div>
        </div>
        <NavItem text="交易" w="w-[235px]">
          <path d="M20 10A31.500 31.500 0 0 1 68 44M56 60A31.500 31.500 0 0 1 8 22M1 22L9 18L13 25M63 46L67 52L75 46" />
          <path d="M26 19L38 33L50 19M38 33V52M26 33H50M26 42H50" />
        </NavItem>
        <NavItem text="发帖" w="w-[235px]">
          <path d="M50 4.500H12Q6.500 4.500 6.500 10V60Q6.500 65.500 12 65.500H62Q68 65.500 68 60V24" />
          <path d="M59 15L33 41L28 45L31 39L57 12Z" fill="#666" />
          <path d="M62 10L69 4" strokeWidth="6" />
        </NavItem>
        <NavItem text="功能" w="w-[233px]">
          <rect x="8" y="6" width="26" height="26" rx="4" />
          <rect x="8" y="39" width="26" height="26" rx="4" />
          <rect x="41" y="39" width="26" height="26" rx="4" />
          <path d="M54 5L68 19.500L54 34L40 19.500Z" />
        </NavItem>
        <NavItem text="设自选" w="w-[236px]">
          <circle cx="38" cy="35" r="31.500" />
          <g fill="#666" stroke="none">
            <circle cx="24" cy="35" r="3.500" />
            <circle cx="38" cy="35" r="3.500" />
            <circle cx="52" cy="35" r="3.500" />
          </g>
        </NavItem>
      </div>
      <div className="mx-auto h-[14px] w-[505px] rounded-full bg-[#b9babc]" />
    </div>
  );
}

export default function App() {
  return (
    <div className="flex h-[2800px] w-[1260px] flex-col overflow-hidden bg-white [font-family:'Noto_Sans_CJK_SC',sans-serif] whitespace-nowrap">
      <StatusBar />
      <Header />
      <Quote />
      <PeriodTabs />
      <Toolbar />
      <div className="flex h-[1494px] shrink-0">
        <div className="flex w-[810px] flex-col">
          <PriceChart />
          <VolumeBar />
          <VolumeChart />
          <MacdBar />
          <MacdChart />
          <KdjBar />
          <KdjChart />
        </div>
        <ChipPanel />
      </div>
      <Banner />
      <SectionTabs />
      <Cards />
      <BottomBar />
    </div>
  );
}
